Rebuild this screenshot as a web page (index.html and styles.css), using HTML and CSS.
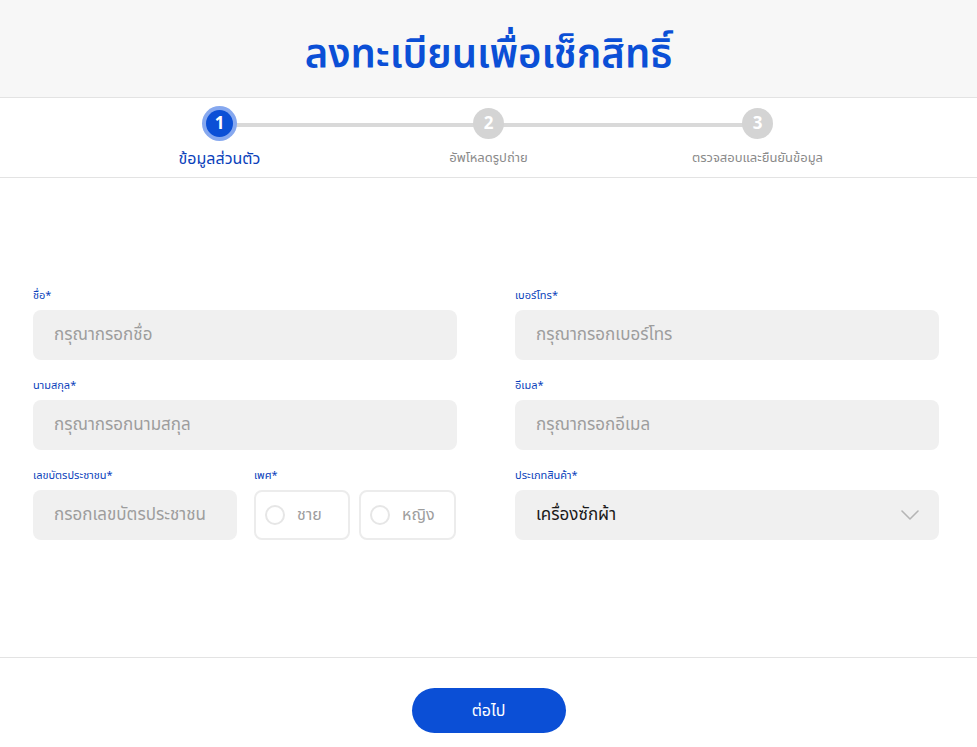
FILE: index.html
```html
<!DOCTYPE html>
<html lang="th">
<head>
    <meta charset="UTF-8">
    <meta name="viewport" content="width=device-width, initial-scale=1.0">
    <title>ลงทะเบียนเพื่อเช็กสิทธิ์</title>
    <link rel="stylesheet" href="styles.css">
</head>
<body>
    <header class="page-header">
        <h1>ลงทะเบียนเพื่อเช็กสิทธิ์</h1>
    </header>

    <nav class="stepper">
        <div class="step active">
            <span class="step-num">1</span>
            <span class="step-label">ข้อมูลส่วนตัว</span>
        </div>
        <div class="step">
            <span class="step-num">2</span>
            <span class="step-label">อัพโหลดรูปถ่าย</span>
        </div>
        <div class="step">
            <span class="step-num">3</span>
            <span class="step-label">ตรวจสอบและยืนยันข้อมูล</span>
        </div>
    </nav>

    <main class="form-area">
        <form class="form-grid" onsubmit="event.preventDefault();">
            <div class="col">
                <div class="field">
                    <label for="fname">ชื่อ*</label>
                    <input id="fname" type="text" placeholder="กรุณากรอกชื่อ">
                </div>
                <div class="field">
                    <label for="lname">นามสกุล*</label>
                    <input id="lname" type="text" placeholder="กรุณากรอกนามสกุล">
                </div>
                <div class="split">
                    <div class="field">
                        <label for="idcard">เลขบัตรประชาชน*</label>
                        <input id="idcard" type="text" placeholder="กรอกเลขบัตรประชาชน">
                    </div>
                    <div class="field">
                        <label>เพศ*</label>
                        <div class="gender">
                            <label class="radio-box"><input type="radio" name="gender"><span class="dot"></span>ชาย</label>
                            <label class="radio-box"><input type="radio" name="gender"><span class="dot"></span>หญิง</label>
                        </div>
                    </div>
                </div>
            </div>
            <div class="col">
                <div class="field">
                    <label for="phone">เบอร์โทร*</label>
                    <input id="phone" type="text" placeholder="กรุณากรอกเบอร์โทร">
                </div>
                <div class="field">
                    <label for="email">อีเมล*</label>
                    <input id="email" type="text" placeholder="กรุณากรอกอีเมล">
                </div>
                <div class="field">
                    <label for="product">ประเภทสินค้า*</label>
                    <div class="select-wrap">
                        <select id="product">
                            <option>เครื่องซักผ้า</option>
                            <option>ตู้เย็น</option>
                            <option>เครื่องปรับอากาศ</option>
                        </select>
                        <svg class="chevron" width="18" height="10" viewBox="0 0 18 10" fill="none">
                            <path d="M1 1l8 8 8-8" stroke="#b5b5b5" stroke-width="1.6" stroke-linecap="round" stroke-linejoin="round"/>
                        </svg>
                    </div>
                </div>
            </div>
        </form>
    </main>

    <footer class="page-footer">
        <button type="button" class="btn-next">ต่อไป</button>
    </footer>
</body>
</html>
```

FILE: styles.css
```css
* {
    box-sizing: border-box;
    margin: 0;
    padding: 0;
}

body {
    font-family: 'Noto Sans Thai', 'Noto Sans Thai Looped', 'Noto Sans', sans-serif;
    background: #fff;
    color: #222;
}

.page-header {
    background: #f7f7f7;
    height: 98px;
    border-bottom: 1px solid #e3e3e3;
    display: flex;
    align-items: center;
    justify-content: center;
}

.page-header h1 {
    color: #0b4fd6;
    font-size: 40px;
    font-weight: 600;
    padding-top: 14px;
}

.stepper {
    height: 80px;
    border-bottom: 1px solid #e3e3e3;
    display: flex;
    justify-content: center;
    padding-top: 10px;
}

.step {
    width: 269px;
    display: flex;
    flex-direction: column;
    align-items: center;
    position: relative;
}

.step:not(:last-child)::after {
    content: "";
    position: absolute;
    top: 15px;
    left: 50%;
    width: 100%;
    height: 4px;
    background: #d9d9d9;
    z-index: 0;
}

.step-num {
    width: 31px;
    height: 31px;
    border-radius: 50%;
    background: #d4d4d4;
    color: #fff;
    font-weight: 700;
    font-size: 17px;
    display: flex;
    align-items: center;
    justify-content: center;
    position: relative;
    z-index: 1;
}

.step.active .step-num {
    width: 27px;
    height: 27px;
    margin-top: 2px;
    background: #0b4fd6;
    box-shadow: 0 0 0 4px #86a8ef;
}

.step-label {
    margin-top: 9px;
    font-size: 13px;
    color: #8a8a8a;
}

.step.active .step-label {
    margin-top: 10px;
    font-size: 16px;
    color: #0b3fbb;
}

.form-area {
    height: 480px;
    border-bottom: 1px solid #e3e3e3;
    padding: 109px 0 0 33px;
}

.form-grid {
    display: grid;
    grid-template-columns: 424px 424px;
    column-gap: 58px;
}

.col {
    display: flex;
    flex-direction: column;
    gap: 17px;
}

.field {
    display: flex;
    flex-direction: column;
}

.field > label {
    font-size: 11px;
    color: #0b3fbb;
    height: 23px;
}

.field input[type="text"],
.field select {
    height: 50px;
    border: none;
    border-radius: 8px;
    background: #f0f0f0;
    padding: 0 21px;
    font-family: inherit;
    font-size: 17px;
    color: #222;
    outline: none;
}

.field input::placeholder {
    color: #9d9d9d;
}

.split {
    display: grid;
    grid-template-columns: 204px 203px;
    column-gap: 17px;
}

.gender {
    display: grid;
    grid-template-columns: 96px 97px;
    column-gap: 9px;
}

.radio-box {
    height: 50px;
    border: 2px solid #ececec;
    border-radius: 8px;
    display: flex;
    align-items: center;
    gap: 12px;
    padding-left: 9px;
    font-size: 16px;
    color: #9d9d9d;
    cursor: pointer;
}

.radio-box input {
    display: none;
}

.dot {
    width: 20px;
    height: 20px;
    border-radius: 50%;
    border: 2px solid #e6e6e6;
}

.select-wrap {
    position: relative;
}

.select-wrap select {
    width: 100%;
    appearance: none;
    font-size: 17px;
    color: #1a1a1a;
}

.chevron {
    position: absolute;
    right: 20px;
    top: 20px;
    pointer-events: none;
}

.page-footer {
    display: flex;
    justify-content: center;
    padding-top: 30px;
}

.btn-next {
    width: 154px;
    height: 45px;
    border: none;
    border-radius: 23px;
    background: #0b4fd6;
    color: #fff;
    font-family: inherit;
    font-size: 16px;
    cursor: pointer;
}
```
